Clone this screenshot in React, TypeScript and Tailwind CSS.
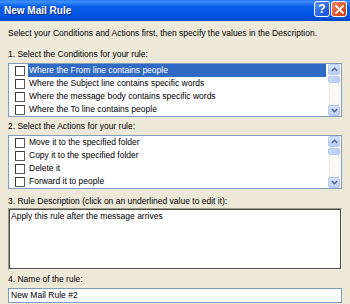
import React from "react";

const FONT = "font-['Liberation_Sans',Arial,sans-serif]";

function Check() {
  return (
    <span className="block w-[10px] h-[10px] shrink-0 bg-white border border-t-[#3a3a3a] border-l-[#3a3a3a] border-r-[#5a5a5a] border-b-[#5a5a5a]" />
  );
}

function ArrowBtn({ up }: { up: boolean }) {
  return (
    <div className="h-[11px] w-full rounded-[2px] border border-[#b5c9f5] bg-[linear-gradient(to_bottom,#d6e2fd,#bccff9)] flex items-center justify-center">
      <svg width="7" height="5" viewBox="0 0 7 5">
        {up ? (
          <path d="M0.8 4 L3.5 1.3 L6.2 4" fill="none" stroke="#4d6185" strokeWidth="1.4" />
        ) : (
          <path d="M0.8 1 L3.5 3.7 L6.2 1" fill="none" stroke="#4d6185" strokeWidth="1.4" />
        )}
      </svg>
    </div>
  );
}

function ScrollBar() {
  return (
    <div className="w-[15px] h-full pl-[2px] pr-[1px] flex flex-col">
      <ArrowBtn up />
      <div className="h-[7px] mt-[1px] w-full rounded-[2px] border border-[#b5c9f5] bg-[linear-gradient(to_right,#c9d8fc,#bccff9)]" />
      <div className="flex-1 mx-[1px] border-l border-r border-dotted border-[#e4e2d8] bg-[#fbfaf6]" />
      <ArrowBtn up={false} />
    </div>
  );
}

function ListBox({ items, selected }: { items: string[]; selected?: number }) {
  return (
    <div className="h-[54px] w-full border border-[#7f9db9] bg-white flex">
      <div className="flex-1 flex flex-col">
        {items.map((t, i) => (
          <div key={i} className="flex items-center h-[13px]">
            <span className="ml-[6px]">
              <Check />
            </span>
            <div
              className={
                "ml-[3px] pl-[1px] h-[13px] flex-1 flex items-center whitespace-nowrap overflow-hidden " +
                (i === selected ? "bg-[#316ac5] text-white" : "text-black")
              }
            >
              {t}
            </div>
          </div>
        ))}
      </div>
      <ScrollBar />
    </div>
  );
}

export default function App() {
  return (
    <div className={"w-[350px] h-[304px] overflow-hidden bg-[#ece9d8] text-[8.5px] leading-[11px] text-black " + FONT}>
      {/* Title bar */}
      <div className="h-[21px] flex items-center bg-[linear-gradient(to_bottom,#2a7bf6_0%,#3d8fff_8%,#0a5fe9_30%,#0256e6_65%,#0150dc_88%,#0042c4_100%)]">
        <div className="pl-[4px] flex-1 text-white font-bold text-[10px] leading-[12px] [text-shadow:1px_1px_0_#0b2a8a]">
          New Mail Rule
        </div>
        <div className="flex items-center gap-[1px] pr-[3px] -mt-[3px]">
          <div className="w-[16px] h-[16px] rounded-[3px] border border-white bg-[linear-gradient(135deg,#5c95ff,#2a62e8_60%,#1f52d6)] flex items-center justify-center text-white font-bold text-[12px] leading-[12px]">
            ?
          </div>
          <div className="w-[16px] h-[16px] rounded-[3px] border border-white bg-[linear-gradient(135deg,#f08a65,#e0512a_60%,#c83c17)] flex items-center justify-center">
            <svg width="9" height="9" viewBox="0 0 9 9">
              <path d="M1 1 L8 8 M8 1 L1 8" stroke="white" strokeWidth="1.8" strokeLinecap="square" />
            </svg>
          </div>
        </div>
      </div>

      <div className="px-[8px] flex flex-col">
        <div className="mt-[7px] h-[11px] whitespace-nowrap">
          Select your Conditions and Actions first, then specify the values in the Description.
        </div>

        <div className="mt-[10px] h-[11px]">1. Select the Conditions for your rule:</div>
        <div className="mt-[3px]">
          <ListBox
            selected={0}
            items={[
              "Where the From line contains people",
              "Where the Subject line contains specific words",
              "Where the message body contains specific words",
              "Where the To line contains people",
            ]}
          />
        </div>

        <div className="mt-[4px] h-[11px]">2. Select the Actions for your rule:</div>
        <div className="mt-[3px]">
          <ListBox
            items={[
              "Move it to the specified folder",
              "Copy it to the specified folder",
              "Delete it",
              "Forward it to people",
            ]}
          />
        </div>

        <div className="mt-[7px] h-[11px]">3. Rule Description (click on an underlined value to edit it):</div>
        <div className="mt-[1px] h-[62px] border border-t-[#9d9a8c] border-l-[#9d9a8c] border-r-[#f4f3ee] border-b-[#f4f3ee]">
          <div className="h-full border border-[#4a4a4a] bg-white pl-[1px] pt-[1px]">
            Apply this rule after the message arrives
          </div>
        </div>

        <div className="mt-[4px] h-[11px]">4. Name of the rule:</div>
        <div className="mt-[3px] h-[15px] border border-[#7f9db9] bg-white pl-[2px] flex items-center">
          New Mail Rule #2
        </div>
      </div>
    </div>
  );
}
